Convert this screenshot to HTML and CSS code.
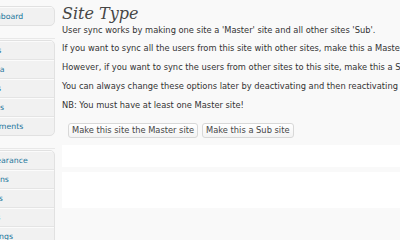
FILE: index.html
```html
<!DOCTYPE html>
<html>
<head>
<meta charset="utf-8">
<link rel="stylesheet" href="styles.css">
</head>
<body>
<div class="layout">
  <nav class="sidebar">
    <div class="menu">
      <ul class="group">
        <li class="item">Dashboard</li>
      </ul>
      <div class="sep"></div>
      <ul class="group">
        <li class="item">Posts</li>
        <li class="item">Media</li>
        <li class="item">Links</li>
        <li class="item">Pages</li>
        <li class="item">Comments</li>
      </ul>
      <div class="sep"></div>
      <ul class="group">
        <li class="item">Appearance</li>
        <li class="item">Plugins</li>
        <li class="item">Users</li>
        <li class="item">Tools</li>
        <li class="item">Settings</li>
      </ul>
    </div>
  </nav>
  <main class="content">
    <h2 class="title">Site Type</h2>
    <p class="para">User sync works by making one site a 'Master' site and all other sites 'Sub'.</p>
    <p class="para">If you want to sync all the users from this site with other sites, make this a Master site.</p>
    <p class="para">However, if you want to sync the users from other sites to this site, make this a Sub site.</p>
    <p class="para">You can always change these options later by deactivating and then reactivating the plugin.</p>
    <p class="para">NB: You must have at least one Master site!</p>
    <div class="actions">
      <button class="btn">Make this site the Master site</button>
      <button class="btn">Make this a Sub site</button>
    </div>
    <div class="panel panel-short"></div>
    <div class="panel panel-tall"></div>
  </main>
</div>
</body>
</html>
```

FILE: styles.css
```css
html, body {
  margin: 0;
  padding: 0;
  background: #f9f9f9;
  overflow: hidden;
  width: 400px;
  height: 240px;
}

.layout {
  display: flex;
  align-items: flex-start;
  font-family: "DejaVu Sans", Verdana, sans-serif;
}

.sidebar {
  width: 55px;
  flex: none;
  overflow: hidden;
  padding-top: 6px;
}

.menu {
  width: 125px;
  margin-left: -70px;
}

.group {
  list-style: none;
  margin: 0;
  padding: 0;
  background: #f1f1f1;
  border: 1px solid #e1e1e1;
  border-radius: 0 5px 5px 0;
  overflow: hidden;
}

.item {
  height: 17px;
  line-height: 17px;
  border-top: 1px solid #fbfbfb;
  border-bottom: 1px solid #e4e4e4;
  padding-left: 50px;
  font-size: 7.8px;
  color: #21759b;
  white-space: nowrap;
}

.group .item:last-child {
  border-bottom: none;
}

.sep {
  height: 6px;
  margin: 6px 0 1px;
  border-bottom: 1px solid #e8e8e8;
}

.content {
  flex: 1;
  padding-left: 7px;
  min-width: 0;
  color: #333;
}

.title {
  margin: 4px 0 0;
  font-family: "DejaVu Serif", Georgia, serif;
  font-style: italic;
  font-weight: normal;
  font-size: 16px;
  line-height: 20px;
  color: #464646;
}

.para {
  margin: 0 0 7.75px;
  font-size: 8.3px;
  line-height: 11px;
  white-space: nowrap;
}

.title + .para {
  margin-top: 0.5px;
}

.actions {
  display: flex;
  gap: 4px;
  padding: 5px 0 0 6px;
}

.btn {
  font-family: "DejaVu Sans", Verdana, sans-serif;
  font-size: 8.3px;
  height: 15px;
  line-height: 13px;
  padding: 0 3px;
  color: #464646;
  background: linear-gradient(#ffffff, #f3f3f3);
  border: 1px solid #d8d8d8;
  border-radius: 3px;
  white-space: nowrap;
}

.panel {
  background: #ffffff;
  margin-right: -10px;
}

.panel-short {
  height: 22px;
  margin-top: 7px;
}

.panel-tall {
  height: 36px;
  margin-top: 5px;
}
```
